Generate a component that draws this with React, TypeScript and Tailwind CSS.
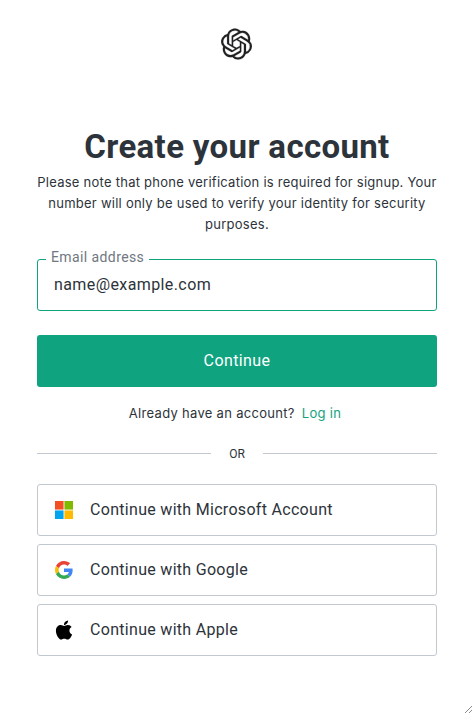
import type { ReactNode } from 'react';
import { FaApple } from 'react-icons/fa';
import { SiOpenai } from 'react-icons/si';

function MicrosoftLogo() {
  return (
    <svg viewBox="0 0 21 21" className="h-[18px] w-[18px]" aria-hidden="true">
      <path fill="#f25022" d="M0 0h10v10H0z" />
      <path fill="#7fba00" d="M11 0h10v10H11z" />
      <path fill="#00a4ef" d="M0 11h10v10H0z" />
      <path fill="#ffb900" d="M11 11h10v10H11z" />
    </svg>
  );
}

function GoogleLogo() {
  return (
    <svg viewBox="0 0 48 48" className="h-[18px] w-[18px]" aria-hidden="true">
      <path fill="#ea4335" d="M24 9.5c3.54 0 6.71 1.22 9.21 3.6l6.85-6.85C35.9 2.38 30.47 0 24 0 14.62 0 6.51 5.38 2.56 13.22l7.98 6.19C12.43 13.72 17.74 9.5 24 9.5z" />
      <path fill="#4285f4" d="M46.98 24.55c0-1.57-.15-3.09-.38-4.55H24v9.02h12.94c-.58 2.96-2.26 5.48-4.78 7.18l7.73 6c4.51-4.18 7.09-10.36 7.09-17.65z" />
      <path fill="#fbbc05" d="M10.53 28.59c-.48-1.45-.76-2.99-.76-4.59s.27-3.14.76-4.59l-7.98-6.19C.92 16.46 0 20.12 0 24c0 3.88.92 7.54 2.56 10.78l7.97-6.19z" />
      <path fill="#34a853" d="M24 48c6.48 0 11.93-2.13 15.89-5.81l-7.73-6c-2.15 1.45-4.92 2.3-8.16 2.3-6.26 0-11.57-4.22-13.47-9.91l-7.98 6.19C6.51 42.62 14.62 48 24 48z" />
    </svg>
  );
}

const PROVIDERS: { label: string; icon: ReactNode }[] = [
  { label: 'Continue with Microsoft Account', icon: <MicrosoftLogo /> },
  { label: 'Continue with Google', icon: <GoogleLogo /> },
  { label: 'Continue with Apple', icon: <FaApple className="h-[22px] w-[22px] shrink-0 text-black" /> },
];

export default function App() {
  return (
    <main className="relative flex h-[713px] w-[472px] flex-col overflow-hidden bg-white pt-7 pr-[35px] pl-[37px] font-['Roboto',sans-serif] text-[#2d333a]">
      <SiOpenai className="mr-px h-8 w-[31px] shrink-0 self-center text-[#202123]" strokeWidth={0.15} />

      <h1 className="mt-[67px] whitespace-nowrap text-center text-[33px] leading-10 font-bold tracking-[0.35px]">
        Create your account
      </h1>
      <p className="mt-[5px] whitespace-nowrap text-center font-['Inter',sans-serif] text-[13px] leading-[21px] tracking-[0.25px]">
        Please note that phone verification is required for signup. Your
        <br />
        number will only be used to verify your identity for security
        <br />
        purposes.
      </p>

      <div className="relative mt-6 h-[52px] shrink-0">
        <label
          htmlFor="email"
          className="absolute -top-3 left-[9px] bg-white px-[5px] text-sm leading-5 tracking-[0.4px] text-[#6f7780]"
        >
          Email address
        </label>
        <input
          id="email"
          type="email"
          placeholder="name@example.com"
          className="h-full w-full rounded-[3px] border border-[#10a37f] px-4 pb-0.5 text-base tracking-[0.4px] outline-none placeholder:text-[#2d333a]"
        />
      </div>

      <button type="button" className="mt-6 h-[52px] shrink-0 rounded-[3px] bg-[#10a37f] text-base tracking-[0.4px] text-white">
        Continue
      </button>

      <p className="mt-4 mr-1 flex justify-center gap-[7px] font-['Inter',sans-serif] text-[13px] leading-[21px] tracking-[0.3px]">
        <span>Already have an account?</span>
        <a href="#login" className="text-[#10a37f]">Log in</a>
      </p>

      <div className="mt-[21px] mb-px flex h-4 items-center text-xs">
        <span className="h-px flex-1 bg-[#c2c8d0]" />
        <span className="w-[52px] pt-px text-center">OR</span>
        <span className="h-px flex-1 bg-[#c2c8d0]" />
      </div>

      <div className="mt-[22px] flex flex-col gap-2">
        {PROVIDERS.map(({ label, icon }) => (
          <button
            key={label}
            type="button"
            className="flex h-[52px] items-center rounded-[3px] border border-[#c2c8d0] px-4 text-base tracking-[0.3px]"
          >
            <span className="mr-4 flex w-5 justify-center">{icon}</span>
            {label}
          </button>
        ))}
      </div>

      {/* resize grip */}
      <svg viewBox="0 0 8 8" className="absolute right-0 bottom-0 h-2 w-2" stroke="#8a8a8a" aria-hidden="true">
        <path d="M1 8 8 1M5 8 8 5" />
      </svg>
    </main>
  );
}
